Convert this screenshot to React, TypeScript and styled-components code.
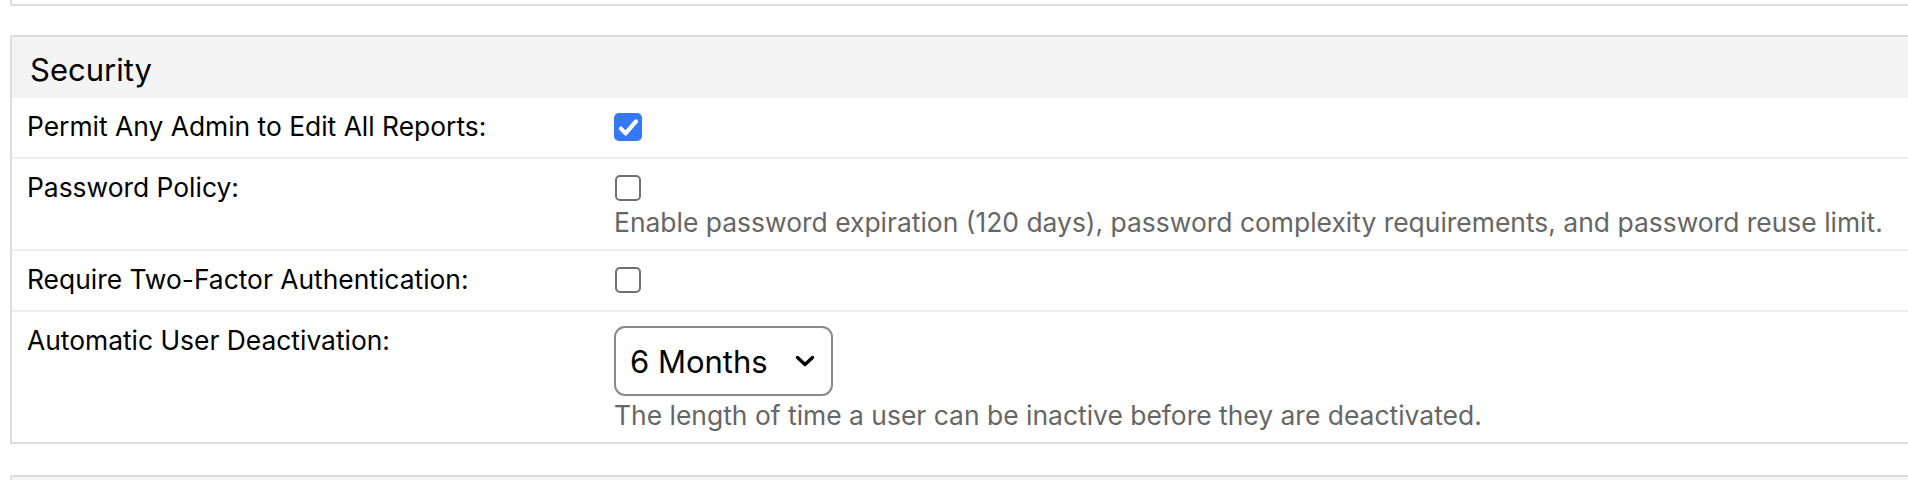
import React from 'react';
import styled, { createGlobalStyle } from 'styled-components';

const GlobalStyle = createGlobalStyle`
    html, body {
        margin: 0;
        padding: 0;
        overflow: hidden;
        background: #ffffff;
    }

    body {
        font-family: Inter, "Noto Sans", "Liberation Sans", sans-serif;
        color: #000000;
    }
`

const Page = styled.div`
    display: flex;
    flex-direction: column;
    gap: 29px;
    margin: 0 -40px 0 10px;
    height: 480px;
    overflow: hidden;
`

const PanelTail = styled.div`
    height: 4px;
    flex-shrink: 0;
    border: 2px solid #dddddd;
    border-top: none;
`

const Panel = styled.section<{ $offset?: number }>`
    margin-top: ${p => p.$offset || 0}px;
    border: 2px solid #dddddd;
    background: #ffffff;
    flex-shrink: 0;
`

const PanelHeader = styled.h2`
    margin: 0;
    padding: 14px 18px 10px;
    min-height: 37px;
    line-height: 37px;
    font-size: 31px;
    font-weight: 400;
    background: #f4f4f4;
`

const Row = styled.div`
    display: grid;
    grid-template-columns: 587px 1fr;
    padding: 9px 15px 12px;
    border-bottom: 2px solid #eeeeee;

    &:last-child {
        border-bottom: none;
    }
`

const Label = styled.div`
    padding-top: 4px;
    font-size: 26.4px;
    line-height: 30px;
`

const Control = styled.div`
    display: flex;
    flex-direction: column;
    align-items: flex-start;
`

const Box = styled.span<{ $checked?: boolean }>`
    display: flex;
    align-items: center;
    justify-content: center;
    box-sizing: border-box;
    width: ${p => p.$checked ? '28px' : '26px'};
    height: ${p => p.$checked ? '28px' : '26px'};
    margin: ${p => p.$checked ? '6px 0 4px' : '7px 0 5px 1px'};
    border-radius: 5px;
    border: ${p => p.$checked ? 'none' : '2px solid #707070'};
    background: ${p => p.$checked ? '#3478f6' : '#ffffff'};
    cursor: pointer;

    svg {
        width: 28px;
        height: 28px;
    }
`

const Hint = styled.div<{ $gap: number }>`
    margin-top: ${p => p.$gap}px;
    font-size: 26.45px;
    line-height: 30px;
    color: #666666;
    white-space: nowrap;
`

const SelectWrap = styled.div`
    position: relative;
    margin-top: 5px;

    svg {
        position: absolute;
        right: 18px;
        top: 29px;
        pointer-events: none;
    }
`

const Select = styled.select`
    appearance: none;
    box-sizing: border-box;
    width: 219px;
    height: 70px;
    padding: 0 50px 0 14px;
    font-family: Inter, "Noto Sans", "Liberation Sans", sans-serif;
    font-size: 31px;
    color: #000000;
    background: #ffffff;
    border: 2px solid #8a8a8a;
    border-radius: 11px;
    outline: none;
`

interface CheckboxProps {
    checked?: boolean,
}

const Checkbox: React.FunctionComponent<CheckboxProps> = ({ checked }) => (
    <Box $checked={checked} role='checkbox' aria-checked={!!checked}>
        {checked &&
            <svg viewBox='0 0 28 28' fill='none'>
                <path d='M7 15.6 L11.6 20.4 L22 8.4' stroke='#ffffff' strokeWidth='4.2' strokeLinecap='round' strokeLinejoin='round' />
            </svg>}
    </Box>
)

const Chevron = () => (
    <svg width='20' height='12' viewBox='0 0 20 12' fill='none'>
        <path d='M2.5 2.5 L10 9.5 L17.5 2.5' stroke='#000000' strokeWidth='3.4' strokeLinecap='round' strokeLinejoin='round' />
    </svg>
)

const App = () => {
    return (
        <>
            <GlobalStyle />
            <Page>
                <PanelTail />
                <Panel>
                    <PanelHeader>Security</PanelHeader>
                    <Row>
                        <Label>Permit Any Admin to Edit All Reports:</Label>
                        <Control>
                            <Checkbox checked />
                        </Control>
                    </Row>
                    <Row>
                        <Label>Password Policy:</Label>
                        <Control>
                            <Checkbox />
                            <Hint $gap={1}>Enable password expiration (120 days), password complexity requirements, and password reuse limit.</Hint>
                        </Control>
                    </Row>
                    <Row>
                        <Label>Require Two-Factor Authentication:</Label>
                        <Control>
                            <Checkbox />
                        </Control>
                    </Row>
                    <Row>
                        <Label>Automatic User Deactivation:</Label>
                        <Control>
                            <SelectWrap>
                                <Select defaultValue='6'>
                                    <option value='1'>1 Month</option>
                                    <option value='3'>3 Months</option>
                                    <option value='6'>6 Months</option>
                                    <option value='12'>12 Months</option>
                                    <option value='0'>Never</option>
                                </Select>
                                <Chevron />
                            </SelectWrap>
                            <Hint $gap={4}>The length of time a user can be inactive before they are deactivated.</Hint>
                        </Control>
                    </Row>
                </Panel>
                <Panel $offset={2}>
                    <PanelHeader />
                </Panel>
            </Page>
        </>
    )
}

export default App;
